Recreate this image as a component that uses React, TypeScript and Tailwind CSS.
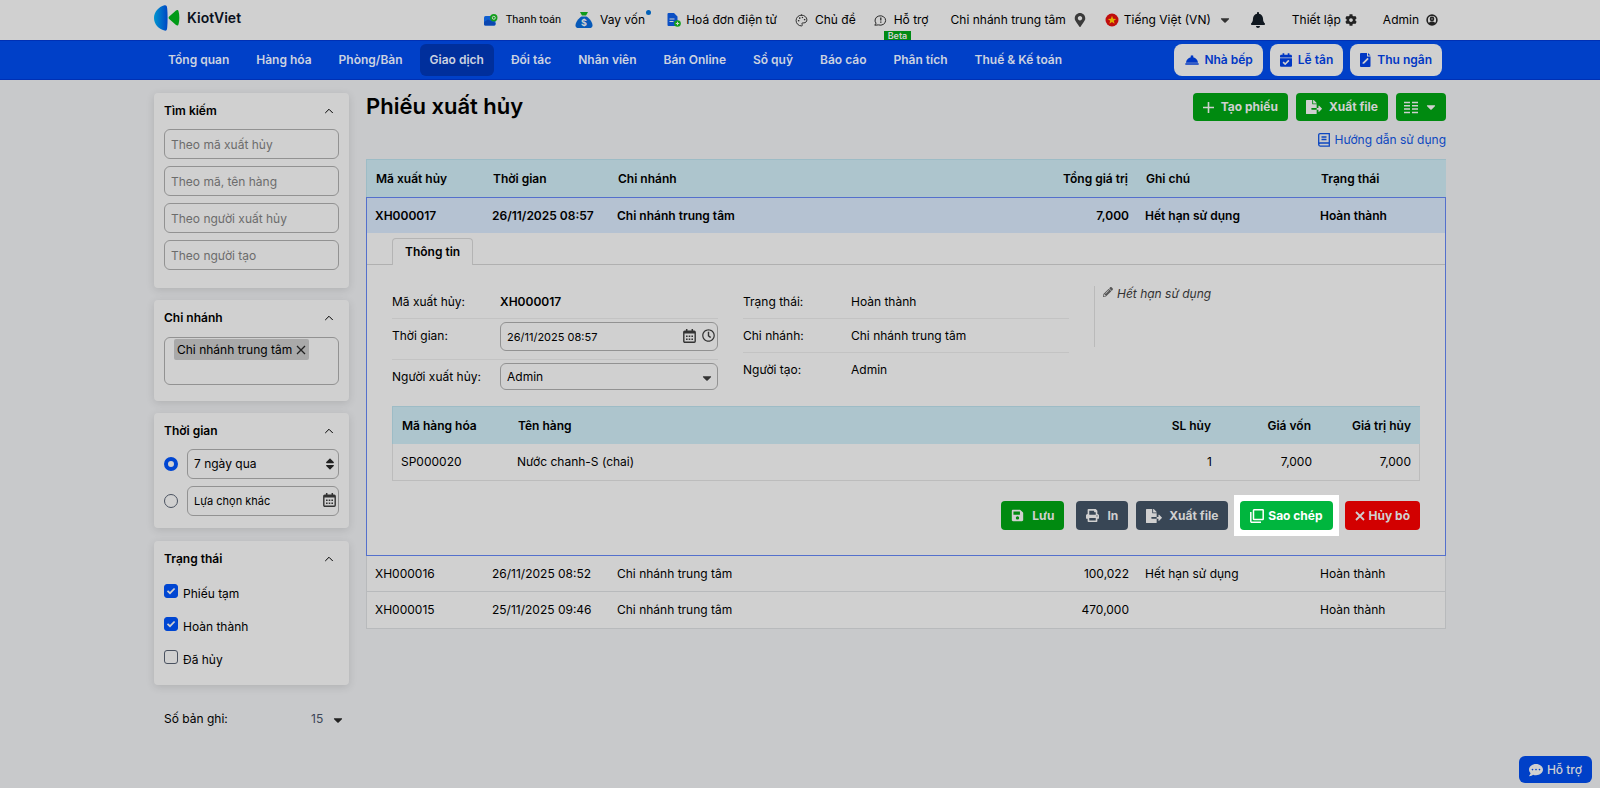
import type { ReactNode } from 'react'
import {
  FaBell,
  FaCalendarCheck,
  FaCaretDown,
  FaCog,
  FaCommentDots,
  FaFileExport,
  FaMapMarkerAlt,
  FaPencilAlt,
  FaPrint,
  FaRegClock,
  FaSave,
  FaSort,
} from 'react-icons/fa'
import { MdRoomService } from 'react-icons/md'
import { LuChevronUp, LuPalette } from 'react-icons/lu'

const NAV = [
  'Tổng quan', 'Hàng hóa', 'Phòng/Bàn', 'Giao dịch', 'Đối tác', 'Nhân viên',
  'Bán Online', 'Sổ quỹ', 'Báo cáo', 'Phân tích', 'Thuế & Kế toán',
]

const SEARCH_FIELDS = ['Theo mã xuất hủy', 'Theo mã, tên hàng', 'Theo người xuất hủy', 'Theo người tạo']

const STATUSES = [
  { label: 'Phiếu tạm', checked: true },
  { label: 'Hoàn thành', checked: true },
  { label: 'Đã hủy', checked: false },
]

const ROWS = [
  { code: 'XH000016', time: '26/11/2025 08:52', branch: 'Chi nhánh trung tâm', total: '100,022', note: 'Hết hạn sử dụng', status: 'Hoàn thành' },
  { code: 'XH000015', time: '25/11/2025 09:46', branch: 'Chi nhánh trung tâm', total: '470,000', note: '', status: 'Hoàn thành' },
]

/* ---------- icons ---------- */

function Logo() {
  return (
    <svg width="26" height="26" viewBox="0 0 26 26" aria-hidden="true">
      <defs>
        <linearGradient id="logo-blue" x1="0" x2="1" y1="0" y2="0">
          <stop offset="0" stopColor="#0095cf" />
          <stop offset="1" stopColor="#0046c4" />
        </linearGradient>
      </defs>
      <path d="M10.500 0.300C12.400 0 13 1 13.200 3.500C13.700 9 13.700 17 13.200 22.500C13 25 12.400 26 10.500 25.600C4.500 24 0 19 0 13C0 7 4.500 2 10.500 0.300Z" fill="url(#logo-blue)" />
      <path d="M15.200 11.600L22 5.600C23.200 4.700 24.200 5 24.600 6.500C25.600 10.500 25.600 15 24.600 19C24.200 20.600 23.200 20.900 22 20L15.200 14.100C14.400 13.300 14.400 12.400 15.200 11.600Z" fill="#009a17" />
    </svg>
  )
}

function WalletIcon() {
  return (
    <svg width="14" height="12" viewBox="0 0 14 12" aria-hidden="true">
      <rect x="0" y="2" width="11.500" height="9.500" rx="1.500" fill="#0f5fd0" />
      <path d="M0 8L4 5.500L11.500 9V10a1.500 1.500 0 0 1-1.500 1.500H1.500A1.500 1.500 0 0 1 0 10Z" fill="#0a46b0" />
      <circle cx="9.800" cy="3.800" r="3.700" fill="#12a01a" />
      <circle cx="9.800" cy="3.800" r="1.500" fill="none" stroke="#d0d0d0" />
    </svg>
  )
}

function MoneyBagIcon() {
  return (
    <svg width="18" height="18" viewBox="0 0 18 18" aria-hidden="true">
      <path d="M5 1h8l-2 3.500H7Z" fill="#0f9a1c" />
      <path d="M6.500 5.500h5C14.500 7.500 17.500 11 17.500 14.500C17.500 16.500 16 17 14.500 17h-11C2 17 .5 16.500 .5 14.500C.5 11 3.500 7.500 6.500 5.500Z" fill="#0759b8" />
      <text x="9" y="15" textAnchor="middle" fontSize="9" fontWeight="700" fill="#d0d0d0">$</text>
    </svg>
  )
}

function InvoiceIcon() {
  return (
    <svg width="14" height="14" viewBox="0 0 14 14" aria-hidden="true">
      <path d="M1.500 0H7l3.500 3.500V12a1 1 0 0 1-1 1h-8a1 1 0 0 1-1-1V1a1 1 0 0 1 1-1Z" fill="#0b4fc4" />
      <path d="M2.500 6h5M2.500 8.500h4" stroke="#d0d0d0" />
      <circle cx="10.500" cy="10.500" r="3.300" fill="#12a01a" />
      <path d="M10.500 8.800v3.400M8.800 10.500h3.400" stroke="#d0d0d0" />
    </svg>
  )
}

function HelpIcon() {
  return (
    <svg width="13" height="13" viewBox="0 0 13 13" fill="none" stroke="#2a2a2a" aria-hidden="true">
      <path d="M.8 11.200L2 9.200A5.300 4.700 0 1 1 4.500 10.900Z" strokeLinejoin="round" />
      <path d="M6.800 3.600v3M6.800 7.600v1.100" strokeWidth="1.300" />
    </svg>
  )
}

function FlagIcon() {
  return (
    <svg width="14" height="14" viewBox="0 0 14 14" aria-hidden="true">
      <circle cx="7" cy="7" r="6.500" fill="#c00d0d" />
      <path d="M7 2.800l1.100 2.900 3.100.2-2.400 1.900.8 3L7 9.100l-2.600 1.700.8-3-2.400-1.900 3.100-.2Z" fill="#e0b000" />
    </svg>
  )
}

function UserIcon() {
  return (
    <svg width="12" height="12" viewBox="0 0 12 12" fill="none" stroke="#222" strokeWidth="1.600" aria-hidden="true">
      <circle cx="6" cy="6" r="4.900" />
      <circle cx="6" cy="4.900" r="1.500" />
      <path d="M2.500 9.500C3.300 8 4.500 7.500 6 7.500s2.700.5 3.500 2L6 11Z" fill="#222" stroke="none" />
    </svg>
  )
}

function CashierIcon() {
  return (
    <svg width="11" height="14" viewBox="0 0 11 14" aria-hidden="true">
      <path d="M1 0h6v3.500h3.500V13a1 1 0 0 1-1 1H1a1 1 0 0 1-1-1V1a1 1 0 0 1 1-1Z" fill="#0037c4" />
      <path d="M8 0l2.500 2.500H8Z" fill="#0037c4" />
      <path d="M2.500 11L3 9.300L7.500 4.800L8.700 6L4.300 10.500Z" fill="#d0d0d0" />
    </svg>
  )
}

function CalendarIcon() {
  return (
    <svg width="13" height="14" viewBox="0 0 13 14" fill="none" stroke="#333" aria-hidden="true">
      <rect x="0.800" y="2.200" width="11.400" height="11" rx="1" strokeWidth="1.400" />
      <path d="M1 3.500h11" strokeWidth="2" />
      <path d="M3.700 0v2.500M9.300 0v2.500" strokeWidth="1.500" />
      <path d="M3 7.200h7M3 10.200h7" strokeWidth="1.600" strokeDasharray="1.600 1.100" />
    </svg>
  )
}

function BookIcon() {
  return (
    <svg width="12" height="14" viewBox="0 0 12 14" fill="none" stroke="#0d47c0" strokeWidth="1.300" aria-hidden="true">
      <path d="M11.300 10H2.200A1.600 1.600 0 0 0 .7 11.600V2A1.300 1.300 0 0 1 2 .7h9.300V13.200H2.200A1.600 1.600 0 0 1 .7 11.600" />
      <path d="M3.500 4h5M3.500 6.500h5" />
    </svg>
  )
}

function ListIcon() {
  return (
    <svg width="14" height="13" viewBox="0 0 14 13" stroke="#d0d0d0" strokeWidth="1.500" aria-hidden="true">
      <path d="M0 1.500h6M8 1.500h6M0 4.800h6M8 4.800h6M0 8.100h6M8 8.100h6M0 11.400h6M8 11.400h6" />
    </svg>
  )
}

function PlusIcon() {
  return (
    <svg width="11" height="11" viewBox="0 0 11 11" stroke="#d0d0d0" strokeWidth="1.600" aria-hidden="true">
      <path d="M5.500 0v11M0 5.500h11" />
    </svg>
  )
}

function CloseIcon({ weight }: { weight: number }) {
  return (
    <svg width="10" height="10" viewBox="0 0 10 10" stroke="currentColor" strokeWidth={weight} aria-hidden="true">
      <path d="M1 1l8 8M9 1l-8 8" />
    </svg>
  )
}

function CopyIcon() {
  return (
    <svg width="14" height="14" viewBox="0 0 14 14" fill="none" stroke="#fff" strokeWidth="1.500" aria-hidden="true">
      <rect x="3.500" y="0.800" width="9.700" height="9.700" rx="0.500" />
      <path d="M.8 3v9.200a1 1 0 0 0 1 1H11" />
    </svg>
  )
}

/* ---------- sidebar ---------- */

function Card({ title, className, children }: { title: string; className: string; children: ReactNode }) {
  return (
    <section className={`rounded bg-[#d0d0d0] px-2.5 pt-2 shadow-[0_2px_8px_rgba(0,0,0,0.12)] ${className}`}>
      <div className="flex h-5 items-center justify-between pr-[3px]">
        <h2 className="font-semibold">{title}</h2>
        <button type="button" aria-label={`Thu gọn ${title}`}>
          <LuChevronUp className="size-3.5" strokeWidth={1.7} />
        </button>
      </div>
      {children}
    </section>
  )
}

const fieldClass = 'w-full rounded-md border border-[#929292] bg-transparent px-1.5 outline-none'
const radioClass = 'size-3.5 shrink-0 appearance-none rounded-full border border-[#4a5260] checked:border-4 checked:border-[#0046d2]'

function Sidebar() {
  return (
    <aside className="w-[195px] shrink-0">
      <Card title="Tìm kiếm" className="pb-[18px]">
        <div className="mt-2 flex flex-col gap-[7px]">
          {SEARCH_FIELDS.map(f => (
            <input key={f} type="text" aria-label={f} placeholder={f} className={`h-[30px] placeholder:text-[#6c6c6c] ${fieldClass}`} />
          ))}
        </div>
      </Card>

      <Card title="Chi nhánh" className="mt-3 pb-4">
        <div className="mt-[9px] h-12 rounded-md border border-[#929292] px-[9px] pt-px">
          <span className="inline-flex h-[21px] items-center gap-1 rounded-xs bg-[#a9a9a9] px-[3px]">
            Chi nhánh trung tâm
            <button type="button" aria-label="Bỏ chọn Chi nhánh trung tâm" className="text-[#222]">
              <CloseIcon weight={1.3} />
            </button>
          </span>
        </div>
      </Card>

      <Card title="Thời gian" className="mt-3 pb-3">
        <div className="mt-2 flex flex-col gap-[7px]">
          <div className="flex items-center gap-[9px]">
            <input type="radio" name="range" defaultChecked aria-label="7 ngày qua" className={radioClass} />
            <div className="relative flex-1">
              <select aria-label="Khoảng thời gian" className={`h-[30px] appearance-none ${fieldClass}`}>
                <option>7 ngày qua</option>
              </select>
              <FaSort className="pointer-events-none absolute top-2 right-0.5 size-3.5 text-[#222]" />
            </div>
          </div>
          <div className="flex items-center gap-[9px]">
            <input type="radio" name="range" aria-label="Lựa chọn khác" className={radioClass} />
            <div className="relative flex-1">
              <input type="text" readOnly aria-label="Lựa chọn thời gian khác" value="Lựa chọn khác" className={`h-[30px] text-[11px] ${fieldClass}`} />
              <span className="pointer-events-none absolute top-[7px] right-[3px]"><CalendarIcon /></span>
            </div>
          </div>
        </div>
      </Card>

      <Card title="Trạng thái" className="mt-[13px] pb-[15px]">
        <div className="mt-[15px] flex flex-col gap-[13px]">
          {STATUSES.map(s => (
            <label key={s.label} className="flex items-start gap-[5px]">
              <span className="relative block size-[14px] shrink-0">
                <input
                  type="checkbox" defaultChecked={s.checked}
                  className="peer block size-[14px] appearance-none rounded-[3px] border border-[#4a5260] checked:border-[#0046d2] checked:bg-[#0046d2]"
                />
                <svg viewBox="0 0 14 14" className="pointer-events-none absolute inset-0 hidden peer-checked:block" fill="none" stroke="#d0d0d0" strokeWidth="1.700">
                  <path d="M3.500 6.800l2.500 2.400 4.600-4.700" />
                </svg>
              </span>
              <span className="leading-5">{s.label}</span>
            </label>
          ))}
        </div>
      </Card>

      <div className="mt-[26px] flex items-center justify-between pr-2 pl-2.5">
        <label htmlFor="page-size">Số bản ghi:</label>
        <div className="relative">
          <select id="page-size" className="w-[30px] appearance-none bg-transparent text-[#3c4658] outline-none">
            <option>15</option>
          </select>
          <FaCaretDown className="pointer-events-none absolute top-0.5 -right-1 size-3.5 text-[#222]" />
        </div>
      </div>
    </aside>
  )
}

/* ---------- top bars ---------- */

function TopBar() {
  return (
    <header className="bg-[#d0d0d0]">
      <div className="mx-auto flex h-10 w-full max-w-[1292px] items-center pr-2 whitespace-nowrap">
        <a href="#" className="mr-auto flex items-center gap-[7px] pb-1 text-sm font-semibold text-[#0b1020]">
          <Logo />
          KiotViet
        </a>
        <a href="#" className="mr-3.5 flex items-center gap-2 font-[Roboto,sans-serif] text-[11px]">
          <WalletIcon />
          Thanh toán
        </a>
        <a href="#" className="relative mr-[22px] flex items-center gap-[7px]">
          <MoneyBagIcon />
          Vay vốn
          <span className="absolute -top-px -right-1.5 size-[5px] rounded-full bg-[#0060b8]" />
        </a>
        <a href="#" className="mr-[18px] flex items-center gap-[5px]">
          <InvoiceIcon />
          Hoá đơn điện tử
        </a>
        <a href="#" className="mr-[18px] flex items-center gap-[7px]">
          <LuPalette className="size-[13px] text-[#222]" strokeWidth={1.7} />
          Chủ đề
        </a>
        <a href="#" className="relative mr-[22px] flex h-10 items-center gap-[7px]">
          <HelpIcon />
          Hỗ trợ
          <span className="absolute bottom-0 left-2.5 bg-[#008a14] px-1 text-[9px] leading-[9px] font-semibold text-[#d0d0d0]">Beta</span>
        </a>
        <a href="#" className="mr-[18px] flex items-center gap-[7px]">
          Chi nhánh trung tâm
          <FaMapMarkerAlt className="size-3.5 text-[#3a3a3a]" />
        </a>
        <button type="button" className="mr-[18px] flex items-center gap-[5px]">
          <FlagIcon />
          Tiếng Việt (VN)
          <FaCaretDown className="ml-0.5 size-3.5 text-[#333]" />
        </button>
        <button type="button" aria-label="Thông báo" className="mr-[26px]">
          <FaBell className="size-4 text-[#101820]" />
        </button>
        <button type="button" className="mr-[26px] flex items-center gap-1">
          Thiết lập
          <FaCog className="size-3 text-[#222]" />
        </button>
        <button type="button" className="flex items-center gap-[7px]">
          Admin
          <UserIcon />
        </button>
      </div>
    </header>
  )
}

function NavBar() {
  const shortcut = 'flex h-8 items-center rounded-lg bg-[#d0d0d0] px-2.5 font-semibold text-[#0037c4]'

  return (
    <nav className="border-y border-[#0030b4] bg-[#0040c8]">
      <div className="mx-auto flex h-[38px] w-full max-w-[1292px] items-center justify-between pr-1 pl-1 whitespace-nowrap">
        <div className="flex gap-[7px]">
          {NAV.map(item => (
            <a
              key={item}
              href="#"
              className={`flex h-8 items-center rounded-md px-2.5 font-semibold text-[#ccd2e0] ${item === 'Giao dịch' ? 'bg-[#002f9c]' : ''}`}
            >
              {item}
            </a>
          ))}
        </div>
        <div className="flex gap-[7px]">
          <a href="#" className={`gap-1 ${shortcut}`}><MdRoomService className="size-4" />Nhà bếp</a>
          <a href="#" className={`gap-1.5 ${shortcut}`}><FaCalendarCheck className="h-3.5 w-3" />Lễ tân</a>
          <a href="#" className={`gap-1.5 ${shortcut}`}><CashierIcon />Thu ngân</a>
        </div>
      </div>
    </nav>
  )
}

/* ---------- detail of the opened slip ---------- */

function SlipDetail() {
  const button = 'flex h-[29px] items-center rounded px-2.5 font-bold text-[#d0d0d0]'

  return (
    <>
      <div className="flex pt-[5px]">
        <div className="w-[25px] border-b border-[#b0b0b0]" />
        <button type="button" className="h-[27px] rounded-t-sm border border-b-0 border-[#b4b4b4] px-3 font-semibold">
          Thông tin
        </button>
        <div className="flex-1 border-b border-[#b0b0b0]" />
      </div>

      <div className="px-[25px] pb-[25px]">
        <div className="grid grid-cols-3 items-start gap-x-[25px] pt-[21px]">
          <div className="leading-[18px]">
            <div className="flex h-[33px] items-center border-b border-[#c3c3c3]">
              <span className="w-[108px]">Mã xuất hủy:</span>
              <span className="font-semibold">XH000017</span>
            </div>
            <div className="flex h-[41px] border-b border-[#c3c3c3]">
              <label htmlFor="slip-time" className="w-[108px] pt-2">Thời gian:</label>
              <div className="relative flex-1 pt-[3px]">
                <input id="slip-time" type="text" defaultValue="26/11/2025 08:57" className={`h-[29px] text-[11px] ${fieldClass}`} />
                <span className="absolute top-2.5 right-[3px] flex gap-1.5 text-[#333]">
                  <CalendarIcon />
                  <FaRegClock className="size-[13px]" />
                </span>
              </div>
            </div>
            <div className="flex h-[30px] items-end">
              <label htmlFor="slip-user" className="w-[108px] self-center pt-1">Người xuất hủy:</label>
              <div className="relative flex-1">
                <select id="slip-user" className={`block h-[27px] appearance-none ${fieldClass}`}>
                  <option>Admin</option>
                </select>
                <FaCaretDown className="pointer-events-none absolute top-2 right-1 size-3.5 text-[#333]" />
              </div>
            </div>
          </div>

          <div>
            <div className="flex h-[33px] items-center border-b border-[#c3c3c3]">
              <span className="w-[108px]">Trạng thái:</span>
              <span>Hoàn thành</span>
            </div>
            <div className="flex h-[34px] items-center border-b border-[#c3c3c3]">
              <span className="w-[108px]">Chi nhánh:</span>
              <span>Chi nhánh trung tâm</span>
            </div>
            <div className="flex h-[33px] items-center">
              <span className="w-[108px]">Người tạo:</span>
              <span>Admin</span>
            </div>
          </div>

          <div className="flex h-[61px] items-start gap-1 border-l border-[#bababa] pl-2 text-[#333] italic">
            <FaPencilAlt className="mt-px size-2.5 text-[#555]" />
            Hết hạn sử dụng
          </div>
        </div>

        <table className="mt-4 w-full table-fixed border-separate border-spacing-0">
          <colgroup>
            <col className="w-[117px]" />
            <col />
            <col className="w-[100px]" />
            <col className="w-[100px]" />
            <col className="w-[100px]" />
          </colgroup>
          <thead>
            <tr className="h-[38px] bg-[#adc5cd] text-right *:border-t *:border-[#9dbcc6] *:px-[9px] *:font-semibold">
              <th className="border-l text-left">Mã hàng hóa</th>
              <th className="text-left">Tên hàng</th>
              <th>SL hủy</th>
              <th>Giá vốn</th>
              <th>Giá trị hủy</th>
            </tr>
          </thead>
          <tbody>
            <tr className="h-[37px] text-right *:border-b *:border-[#bcbcbc] *:px-2">
              <td className="border-l text-left">SP000020</td>
              <td className="text-left">Nước chanh-S (chai)</td>
              <td>1</td>
              <td>7,000</td>
              <td className="border-r">7,000</td>
            </tr>
          </tbody>
        </table>

        <div className="mt-5 flex justify-end">
          <button type="button" className={`mr-3 gap-2 bg-[#008a10] ${button}`}><FaSave className="size-[13px]" />Lưu</button>
          <button type="button" className={`mr-2 gap-2 bg-[#384655] ${button}`}><FaPrint className="size-[13px]" />In</button>
          <button type="button" className={`mr-3 gap-[7px] bg-[#384655] ${button}`}><FaFileExport className="size-4" />Xuất file</button>
          <div className="-my-1.5 mr-1.5 -ml-1.5 bg-white p-1.5">
            <button type="button" className="flex h-[29px] items-center gap-1 rounded bg-[#00b63e] px-2.5 font-bold text-white">
              <CopyIcon />
              Sao chép
            </button>
          </div>
          <button type="button" className={`gap-1 bg-[#d20000] ${button}`}><CloseIcon weight={1.8} />Hủy bỏ</button>
        </div>
      </div>
    </>
  )
}

function SlipTable() {
  return (
    <table className="mt-[11px] w-full table-fixed border-separate border-spacing-0 text-left">
      <colgroup>
        <col className="w-[118px]" />
        <col className="w-[125px]" />
        <col />
        <col className="w-[120px]" />
        <col className="w-[175px]" />
        <col className="w-[134px]" />
      </colgroup>
      <thead>
        <tr className="h-[38px] bg-[#adc5cd] *:border-t *:border-[#9dbcc6] *:px-[9px] *:font-semibold">
          <th className="border-l">Mã xuất hủy</th>
          <th>Thời gian</th>
          <th>Chi nhánh</th>
          <th className="text-right">Tổng giá trị</th>
          <th>Ghi chú</th>
          <th>Trạng thái</th>
        </tr>
      </thead>
      <tbody>
        <tr className="h-9 bg-[#b5c2d2] font-semibold *:border-t *:border-[#5470cc] *:px-2">
          <td className="border-l">XH000017</td>
          <td>26/11/2025 08:57</td>
          <td>Chi nhánh trung tâm</td>
          <td className="text-right">7,000</td>
          <td>Hết hạn sử dụng</td>
          <td className="border-r">Hoàn thành</td>
        </tr>
        <tr>
          <td colSpan={6} className="border-x border-b border-[#5470cc] bg-[#d0d0d0] p-0">
            <SlipDetail />
          </td>
        </tr>
        {ROWS.map(r => (
          <tr key={r.code} className="h-9 bg-[#d0d0d0] *:border-b *:border-[#b8babc] *:px-2 last:h-[37px]">
            <td className="border-l">{r.code}</td>
            <td>{r.time}</td>
            <td>{r.branch}</td>
            <td className="text-right">{r.total}</td>
            <td>{r.note}</td>
            <td className="border-r">{r.status}</td>
          </tr>
        ))}
      </tbody>
    </table>
  )
}

export default function App() {
  const action = 'flex h-7 items-center rounded bg-[#008a10] font-bold text-[#d0d0d0]'

  return (
    <div className="min-h-screen bg-[#c8c9cb] font-[Inter,'Noto_Sans',sans-serif] text-xs text-black">
      <TopBar />
      <NavBar />

      <div className="mx-auto flex w-full max-w-[1292px] gap-[17px] pt-[13px]">
        <Sidebar />

        <main className="min-w-0 flex-1">
          <div className="flex items-start justify-between">
            <h1 className="text-[22px] leading-[26px] font-semibold">Phiếu xuất hủy</h1>
            <div className="flex gap-2">
              <button type="button" className={`gap-[7px] px-2.5 ${action}`}><PlusIcon />Tạo phiếu</button>
              <button type="button" className={`gap-[7px] px-2.5 ${action}`}><FaFileExport className="size-4" />Xuất file</button>
              <button type="button" aria-label="Tùy chọn cột" className={`gap-1.5 px-2 ${action}`}>
                <ListIcon />
                <FaCaretDown className="size-3.5" />
              </button>
            </div>
          </div>
          <div className="mt-[11px] flex justify-end">
            <a href="#" className="flex items-center gap-1 text-[#0d47c0]">
              <BookIcon />
              Hướng dẫn sử dụng
            </a>
          </div>
          <SlipTable />
        </main>
      </div>

      <button type="button" className="fixed right-2 bottom-[5px] flex h-[27px] items-center gap-1 rounded-md bg-[#0040c8] px-2.5 font-medium text-[#d0d0d0]">
        <FaCommentDots className="size-3.5" />
        Hỗ trợ
      </button>
    </div>
  )
}
